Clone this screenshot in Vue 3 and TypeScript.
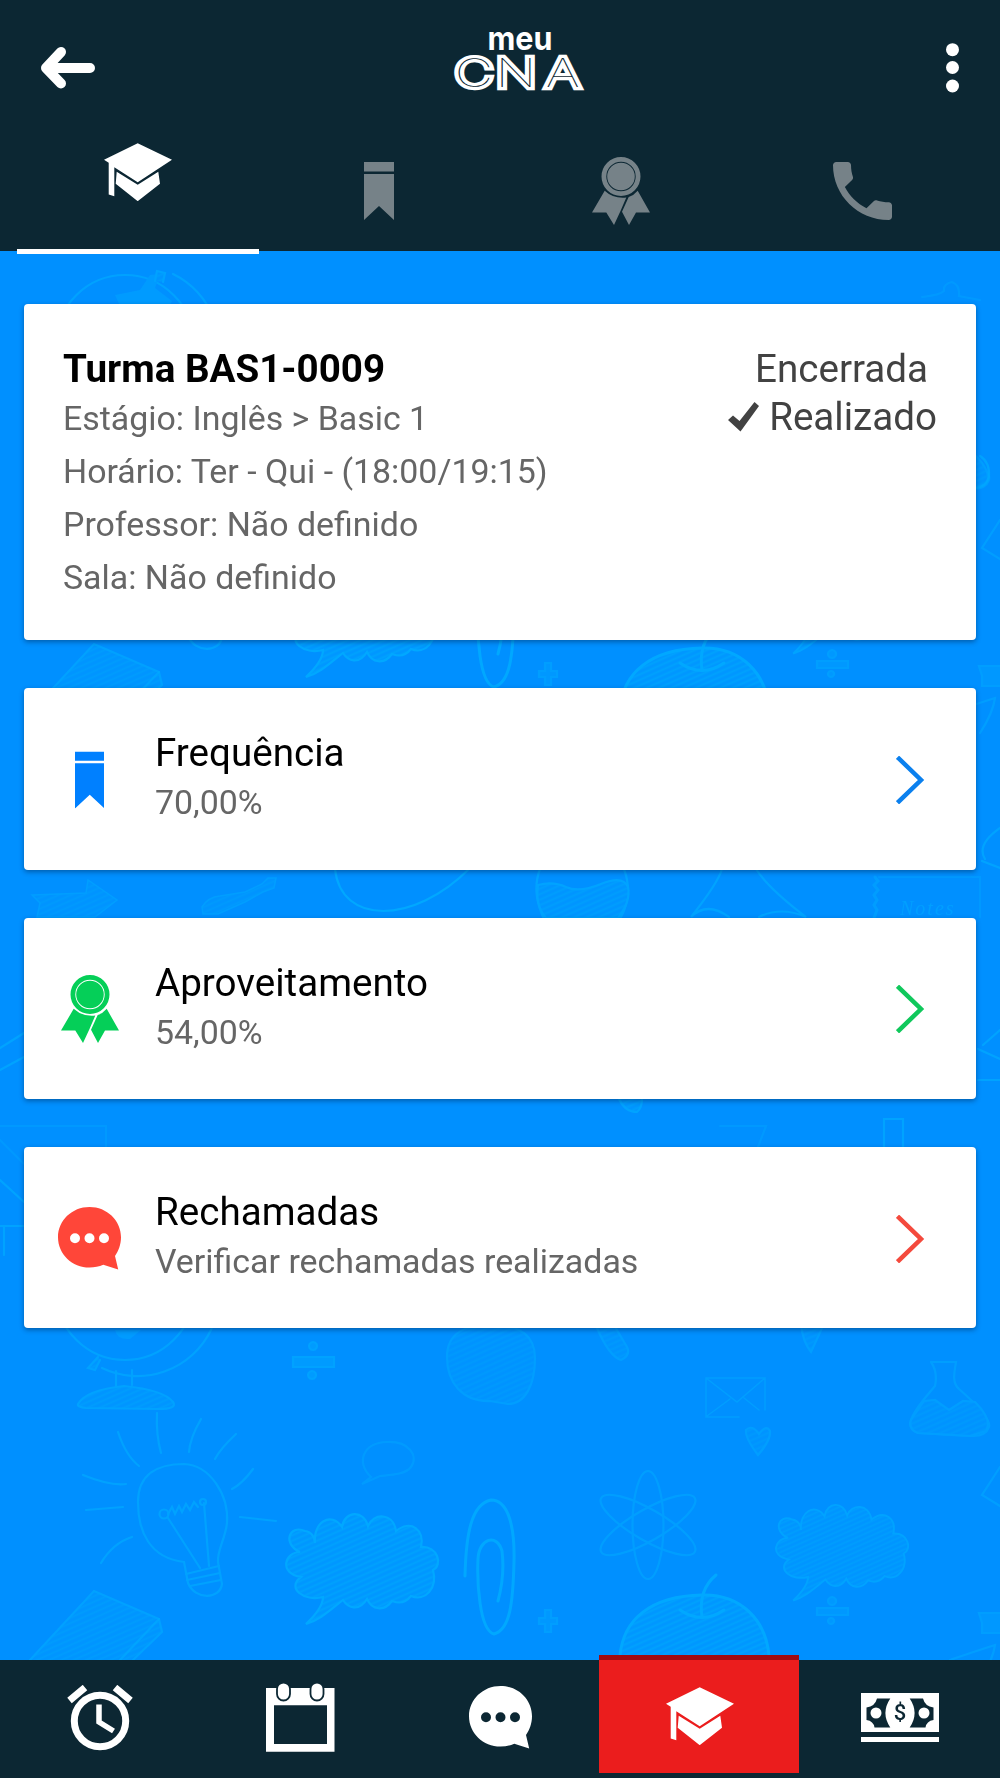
<script setup lang="ts">
interface Row {
  icon: 'bookmark' | 'ribbon' | 'chat'
  title: string
  detail: string
  color: string
}

const details: string[] = [
  'Estágio: Inglês > Basic 1',
  'Horário: Ter - Qui - (18:00/19:15)',
  'Professor: Não definido',
  'Sala: Não definido',
]

const rows: Row[] = [
  { icon: 'bookmark', title: 'Frequência', detail: '70,00%', color: 'blue' },
  { icon: 'ribbon', title: 'Aproveitamento', detail: '54,00%', color: 'green' },
  { icon: 'chat', title: 'Rechamadas', detail: 'Verificar rechamadas realizadas', color: 'red' },
]
</script>

<template>
  <div class="page">
    <!-- shared icon shapes -->
    <svg class="defs" width="0" height="0">
      <symbol id="cap" viewBox="0 0 68 58.4">
        <path d="M33.7 0.2 68 16.8 33.7 39.2 10.3 24.2V53.2L4.7 51.5V19.8L0 16.8Z" />
        <path d="M12.7 28.8 33.7 41.8 54.3 28.8 56 40.8 33.7 58.2 11.7 40.8Z" />
      </symbol>
      <symbol id="bookmark" viewBox="0 0 30 58">
        <path d="M0 0H30V9.5H0ZM0 12H30V58L15 44 0 58Z" />
      </symbol>
      <symbol id="ribbon" viewBox="0 0 58 68">
        <path fill-rule="evenodd" d="M29 0a19.5 19.5 0 1 1 0 39a19.5 19.5 0 1 1 0-39ZM29 4.8a14.7 14.7 0 1 0 0 29.4a14.7 14.7 0 1 0 0-29.4ZM29 5.7a13.8 13.8 0 1 1 0 27.6a13.8 13.8 0 1 1 0-27.6Z" />
        <path d="M12.7 33.8Q21.5 42 34.3 40.6L28.5 54 22 68 14.3 55.5H0Z" />
        <path d="M45.7 33.8 58 55.5H44L37 68 30 54.8 36.7 40Q42 38.3 45.7 33.8Z" />
      </symbol>
      <symbol id="chat" viewBox="0 0 63 63">
        <path fill-rule="evenodd" d="M31.5 0C49 0 63 13.5 63 30.2C63 37.5 60.5 44 57 49L60.2 62.5 45.3 57.8C41 59.6 36.5 60.5 31.5 60.5C14 60.5 0 47 0 30.2C0 13.5 14 0 31.5 0ZM17 26.2a5 5 0 1 0 0 10a5 5 0 1 0 0-10ZM31.5 26.2a5 5 0 1 0 0 10a5 5 0 1 0 0-10ZM46 26.2a5 5 0 1 0 0 10a5 5 0 1 0 0-10Z" />
      </symbol>
    </svg>

    <!-- school doodles behind the content -->
    <svg class="doodles" viewBox="0 0 1000 1778" width="1000" height="1778">
      <defs>
        <pattern id="hatch" width="40" height="5" patternUnits="userSpaceOnUse" patternTransform="rotate(-24)">
          <rect width="40" height="5" fill="#0097ff" />
          <path d="M0 1.5H40" stroke="#00a1fe" stroke-width="1.8" />
        </pattern>
        <g id="cloud">
          <path d="M300 1552C282 1544 289 1524 305 1531C312 1532 315 1538 315 1543C313 1522 331 1511 342 1527C345 1510 364 1510 368 1526C373 1513 393 1512 396 1531C411 1519 425 1530 421 1547C438 1546 443 1565 433 1570C438 1588 425 1602 411 1596C403 1606 395 1602 392 1601C384 1612 372 1610 367 1599C359 1612 348 1608 343 1600C330 1610 320 1620 306 1624Q323 1608 323 1597C304 1602 286 1588 301 1577C278 1573 285 1552 300 1552Z" fill="url(#hatch)" />
        </g>
        <g id="tile">
          <g opacity=".75">
            <circle cx="125" cy="1291" r="69" />
            <path d="M173 1221A80 80 0 0 1 102 1368" />
            <path d="M115 1242 140 1237 150 1222 160 1221 155 1235 172 1248 165 1262 140 1262 120 1253ZM115 1330Q117 1340 130 1339L141 1330M146 1340 156 1330" fill="#009fff" stroke="none" />
            <path d="M155 1228 157 1218 165 1220 163 1229M98 1357 88 1368 95 1370 100 1360M116 1371V1386M132 1370V1385M78 1404Q86 1390 124 1386Q164 1390 173 1402Q178 1409 158 1409L86 1408Q77 1407 78 1404Z" fill="url(#hatch)" />
            <path d="M293 1357h41v10h-41ZM313 1342a4 4 0 1 0 .1 0ZM312 1371a4 4 0 1 0 .1 0Z" fill="#009fff" />
            <path d="M157 1413Q156 1435 161 1453M118 1432Q126 1456 139 1466M83 1475Q110 1486 126 1484M86 1510 123 1507M101 1563Q113 1543 132 1537M201 1419Q190 1438 189 1452M236 1434Q220 1449 215 1459M253 1469Q242 1484 232 1489M240 1517 276 1521" />
            <path d="M184 1562C150 1558 138 1532 138 1502C138 1474 158 1464 184 1464C210 1465 229 1495 227 1523C225 1540 217 1550 218 1562L222 1584C220 1600 195 1600 188 1583Z" />
            <path d="M186 1574 219 1566M187 1580 220 1573M190 1586 221 1580M168 1518 200 1568M204 1503 209 1566M168 1514 172 1507 175 1514 179 1506 182 1512 186 1504 190 1510 194 1502 198 1507" />
            <circle cx="164" cy="1514" r="4.5" /><circle cx="203" cy="1502" r="3" />
            <path d="M362 1484 371 1477C356 1463 362 1443 387 1442C409 1441 419 1456 411 1467C405 1475 389 1475 380 1476Z" opacity=".65" />
          </g>
          <use href="#cloud" />
          <use href="#cloud" transform="translate(527 187.600) scale(.87)" opacity=".8" />
          <path d="M30 1660 94 1591 159 1619 162 1632 133 1660" fill="url(#hatch)" opacity=".7" />
          <path d="M159 1619 120 1660" opacity=".7" />
          <path d="M465 1576C466 1535 471 1504 491 1500C508 1500 515 1526 514 1562C513 1603 510 1630 494 1634C479 1630 477 1580 478 1559C479 1538 497 1533 502 1551Q505 1575 498 1601" stroke-width="3" />
          <path d="M620 1656C623 1620 650 1596 702 1595C741 1594 766 1620 769 1656" fill="url(#hatch)" stroke-width="3" />
          <path d="M716 1575Q698 1590 702 1617M680 1610Q702 1625 724 1610" stroke-width="3" />
          <g opacity=".6">
            <path d="M447 1357C447 1332 466 1325 492 1325C516 1325 535 1333 535 1358C535 1385 525 1404 508 1404L490 1401C462 1402 447 1382 447 1357Z" fill="url(#hatch)" />
            <path d="M597 1328Q609 1356 621 1360Q631 1355 627 1347L614 1325M801 1325Q803 1342 811 1352L823 1326" fill="url(#hatch)" />
            <path d="M706 1378 765 1378V1410M706 1378V1417H739M706 1378 737 1402 765 1378M707 1416 730 1399M744 1398 759 1410" stroke-width="1.500" />
            <path d="M758 1455Q745 1438 746 1430Q752 1424 759 1434Q766 1424 770 1431Q771 1440 758 1455Z" fill="url(#hatch)" />
            <path d="M931 1362H956C955 1370 951 1382 959 1389C983 1410 991 1421 989 1427Q986 1436 973 1436L918 1433Q908 1429 911 1420C915 1408 926 1397 935 1386Q938 1372 931 1362" />
            <path d="M924 1401 935 1400 949 1410 963 1401 975 1402C987 1414 991 1423 986 1431L970 1436 918 1433Q908 1429 911 1420Z" fill="url(#hatch)" />
            <ellipse cx="648" cy="1525" rx="15.5" ry="54" /><ellipse cx="648" cy="1525" rx="15.5" ry="54" transform="rotate(60 648 1525)" /><ellipse cx="648" cy="1525" rx="15.5" ry="54" transform="rotate(-60 648 1525)" />
            <path d="M817 1608h31v7h-31ZM832 1597a4 4 0 1 0 .1 0ZM831 1618a3 3 0 1 0 .1 0ZM545 1610h6v8h6v6h-6v8h-6v-8h-6v-6h6ZM979 1613H1002V1633H982V1623Z" fill="#009fff" />
            <path d="M1000 1467 982 1495 1000 1506M950 1660Q976 1651 995 1645Q993 1660 980 1680" />
          </g>
        </g>
      </defs>
      <g fill="none" stroke="#00a8ff" stroke-width="2.2" stroke-linecap="round">
        <use href="#tile" />
        <use href="#tile" transform="translate(0 -947)" />
        <path d="M32 895 86 893 88 880 117 900 95 917H37L40 903ZM202 907Q208 897 220 896L245 892 262 884 268 878H276L274 888 263 892 245 902 218 914H203Z" fill="url(#hatch)" opacity=".6" stroke-width="1.5" />
        <path d="M335 869C341 925 413 925 469 869" />
        <g opacity=".8">
          <path d="M540 869C532 890 539 908 544 919M624 869C631 888 628 905 620 919M722 869Q718 883 691 917Q707 901 729 917M756 869Q768 888 806 917Q781 906 759 917" />
          <path d="M538 885Q553 881 566 887T601 884T628 887Q631 901 618 918H546Q535 905 538 885Z" fill="url(#hatch)" />
          <path d="M619 1099Q625 1112 637 1112Q642 1108 642 1099" fill="url(#hatch)" />
          <path d="M884 1148V1119H903V1148" />
          <path d="M875 877l3 4-4 4 4 5-4 5 3 5-3 5 3 5-3 8" stroke-width="3" opacity=".7" />
          <path d="M1000 1059 978 1049M985 859Q976 845 1000 828M982 861 1000 868M978 1080H1000M1000 1030 983 1045M0 1048 24 1033M0 1070 24 1057M0 1226H24M4 1226V1255M0 1180 24 1202" />
          <path d="M980 456Q990 462 989 477Q986 487 976 488" />
          <g opacity=".5"><path d="M879 877H980V917M720 1126H766L758 1147M0 1126H106V1147M0 1140 24 1164M922 297Q940 295 944 291Q943 284 952 282Q960 285 959 296L980 300" /></g>
        </g>
      </g>
      <text x="900" y="915" class="notes">Notes</text>
    </svg>

    <header class="header">
      <div class="topbar">
        <button class="plain" aria-label="Voltar">
          <svg width="56" height="44" viewBox="0 0 56 44">
            <path d="M6 22H50M21 6 6 22 21 37.500" fill="none" stroke="#fff" stroke-width="10" stroke-linecap="round" stroke-linejoin="round" />
          </svg>
        </button>
        <svg class="logo" width="140" height="90" viewBox="0 0 140 90">
          <text class="meu" x="36.5" y="33" textLength="65" lengthAdjust="spacingAndGlyphs">meu</text>
          <text class="cna" x="2.8 32.8 69.6" y="70.5" transform="scale(1.36 1)">CNA</text>
        </svg>
        <button class="plain more" aria-label="Mais opções">
          <svg width="13" height="50" viewBox="0 0 13 50" fill="#fff">
            <circle cx="6.5" cy="6.7" r="6.5" /><circle cx="6.5" cy="24.5" r="6.5" /><circle cx="6.5" cy="43" r="6.5" />
          </svg>
        </button>
      </div>
      <nav class="tabs">
        <div class="tab active"><svg width="68" height="58.4"><use href="#cap" /></svg></div>
        <div class="tab"><svg width="30" height="58"><use href="#bookmark" /></svg></div>
        <div class="tab"><svg width="58" height="68"><use href="#ribbon" /></svg></div>
        <div class="tab">
          <svg width="59" height="58" viewBox="3 3 18 18" preserveAspectRatio="none">
            <path d="M6.62 10.79c1.44 2.83 3.76 5.14 6.59 6.59l2.2-2.2c.27-.27.67-.36 1.02-.24 1.12.37 2.33.57 3.57.57.55 0 1 .45 1 1V20c0 .55-.45 1-1 1-9.39 0-17-7.61-17-17 0-.55.45-1 1-1h3.5c.55 0 1 .45 1 1 0 1.25.2 2.45.57 3.57.11.35.03.74-.25 1.02l-2.2 2.2z" />
          </svg>
        </div>
      </nav>
    </header>

    <main class="content">
      <section class="card summary">
        <div>
          <h1>Turma BAS1-0009</h1>
          <p v-for="line in details" :key="line">{{ line }}</p>
        </div>
        <div class="status">
          <div class="closed">Encerrada</div>
          <div class="done">
            <svg width="31" height="30" viewBox="0 0 31 30" fill="#424242"><path d="M0 18 5 13.500 11.500 19 26.500 0 31 4 12.500 29.500Z" /></svg>
            <span>Realizado</span>
          </div>
        </div>
      </section>

      <section v-for="row in rows" :key="row.title" class="card row" :class="row.color">
        <div class="symbol">
          <svg v-if="row.icon === 'bookmark'" width="29.5" height="58" viewBox="0 0 30 58"><use href="#bookmark" /></svg>
          <svg v-else-if="row.icon === 'ribbon'" width="58" height="68"><use href="#ribbon" /></svg>
          <svg v-else width="63" height="63"><use href="#chat" /></svg>
        </div>
        <div class="label">
          <h2>{{ row.title }}</h2>
          <p>{{ row.detail }}</p>
        </div>
        <svg class="chevron" width="29" height="48" viewBox="0 0 29 48">
          <path d="M1.500 1.200 25 24 1.500 46.800" fill="none" stroke="currentColor" stroke-width="4.5" />
        </svg>
      </section>
    </main>

    <footer class="bottom">
      <div class="item">
        <svg width="66" height="66" viewBox="0 0 66 66" fill="none" stroke="#fff">
          <circle cx="33" cy="36" r="25.7" stroke-width="7" />
          <path d="M32 19.500V37L46.500 46" stroke-width="5.5" />
          <path d="M2.500 15.500 18 2.500M48 2.500 63.500 15.500" stroke-width="7" />
        </svg>
      </div>
      <div class="item">
        <svg width="69" height="69" viewBox="0 0 69 69">
          <path fill="#fff" fill-rule="evenodd" d="M0 5H68.500V68.700H0ZM8 22.300V61H61V22.300Z" />
          <rect x="11" y="-.5" width="13" height="18" rx="6.5" fill="#fff" stroke="#0c2733" stroke-width="1.8" />
          <rect x="44.5" y="-.5" width="13" height="18" rx="6.5" fill="#fff" stroke="#0c2733" stroke-width="1.8" />
        </svg>
      </div>
      <div class="item"><svg width="63" height="63"><use href="#chat" /></svg></div>
      <div class="item current"><svg width="68" height="58.4"><use href="#cap" /></svg></div>
      <div class="item">
        <svg width="78" height="49" viewBox="0 0 78 49">
          <path d="M0 0H78V39H0ZM0 44H78V49H0Z" />
          <g fill="#0c2733">
            <path id="bill" d="M16 5.500H29.300Q19.500 20 29.300 34.500H13.500Q12.500 28 5.500 27V14.500Q14 13.500 16 5.500Z" />
            <use href="#bill" transform="translate(78 0)scale(-1 1)" />
          </g>
          <circle cx="15" cy="20" r="5.5" /><circle cx="63" cy="20" r="5.5" />
          <text class="dollar" x="39" y="27.3" text-anchor="middle">$</text>
        </svg>
      </div>
    </footer>
  </div>
</template>

<style>
body {
  margin: 0;
  background: #0090ff;
}
</style>

<style scoped>
.page {
  position: relative;
  width: 1000px;
  height: 1778px;
  overflow: hidden;
  display: flex;
  flex-direction: column;
  background: #0090ff;
  font-family: Roboto, "Liberation Sans", sans-serif;
}
.defs,
.doodles {
  position: absolute;
  top: 0;
  left: 0;
}
.notes {
  font: italic 20px "Liberation Serif", serif;
  letter-spacing: 2px;
  fill: #009fff;
}
svg {
  display: block;
}
.header {
  position: relative;
  box-sizing: border-box;
  height: 251px;
  background: #0c2733;
}
.topbar {
  display: flex;
  justify-content: space-between;
  align-items: center;
  height: 136px;
  padding: 0 41px 0 40px;
}
.plain {
  padding: 0;
  border: 0;
  background: none;
}
.logo {
  margin-right: 1px;
  margin-top: -13px;
  overflow: visible;
}
.meu {
  font: 700 33px Inter, sans-serif;
  fill: #fff;
}
.cna {
  font: 100 39px Inter, sans-serif;
  fill: #0c2733;
  stroke: #fff;
  stroke-width: 6.4px;
  stroke-miterlimit: 2;
  paint-order: stroke;
}
.tabs {
  display: flex;
  height: 118px;
  padding: 0 17px;
}
.tab {
  flex: 1;
  box-sizing: border-box;
  display: flex;
  justify-content: center;
  align-items: center;
  padding-bottom: 8px;
  fill: #768288;
}
.tab.active {
  fill: #fff;
  padding-bottom: 41px;
  border-bottom: 5px solid #fff;
}
.content {
  position: relative;
  flex: 1;
  display: flex;
  flex-direction: column;
  gap: 48px;
  padding: 53px 24px 0;
}
.card {
  box-sizing: border-box;
  display: flex;
  background: #fff;
  border-radius: 4px;
  box-shadow: 0 2px 5px rgba(0, 30, 70, 0.45);
}
h1,
h2,
p {
  margin: 0;
}
h1,
h2 {
  font-size: 38.6px;
  line-height: 47px;
  color: #000;
}
h2 {
  font-weight: 400;
}
p {
  font-size: 33.9px;
  line-height: 53px;
  color: #666;
}
.summary {
  height: 336.2px;
  justify-content: space-between;
  padding: 41px 39px 0;
}
.status {
  display: flex;
  flex-direction: column;
  align-items: flex-end;
  font-size: 38.6px;
  line-height: 48px;
  color: #424242;
}
.closed {
  padding-right: 9px;
}
.done {
  display: flex;
  align-items: center;
  gap: 10px;
}
.row {
  height: 181.4px;
}
.symbol {
  width: 131px;
  display: flex;
  align-items: center;
  justify-content: center;
  padding-top: 2px;
}
.label {
  flex: 1;
  padding-top: 41px;
}
.chevron {
  align-self: center;
  margin: 2px 51px 0 0;
}
.blue {
  color: #0b80ee;
  fill: #0080ff;
}
.green {
  color: #10c85c;
  fill: #05cf58;
}
.red {
  color: #f44a3d;
  fill: #ff4639;
}
.bottom {
  position: relative;
  display: flex;
  height: 118.5px;
  background: #0c2733;
}
.item {
  width: 200px;
  display: flex;
  align-items: center;
  justify-content: center;
  fill: #fff;
  padding-bottom: 2px;
}
.current {
  box-sizing: border-box;
  height: 118px;
  margin: -5px 1px 0 -1px;
  border-top: 5px solid #a00b12;
  background: #eb1d1d;
  padding: 0 0 0 2px;
}
.dollar {
  font: 500 22px Roboto, sans-serif;
  fill: #0c2733;
}
</style>
